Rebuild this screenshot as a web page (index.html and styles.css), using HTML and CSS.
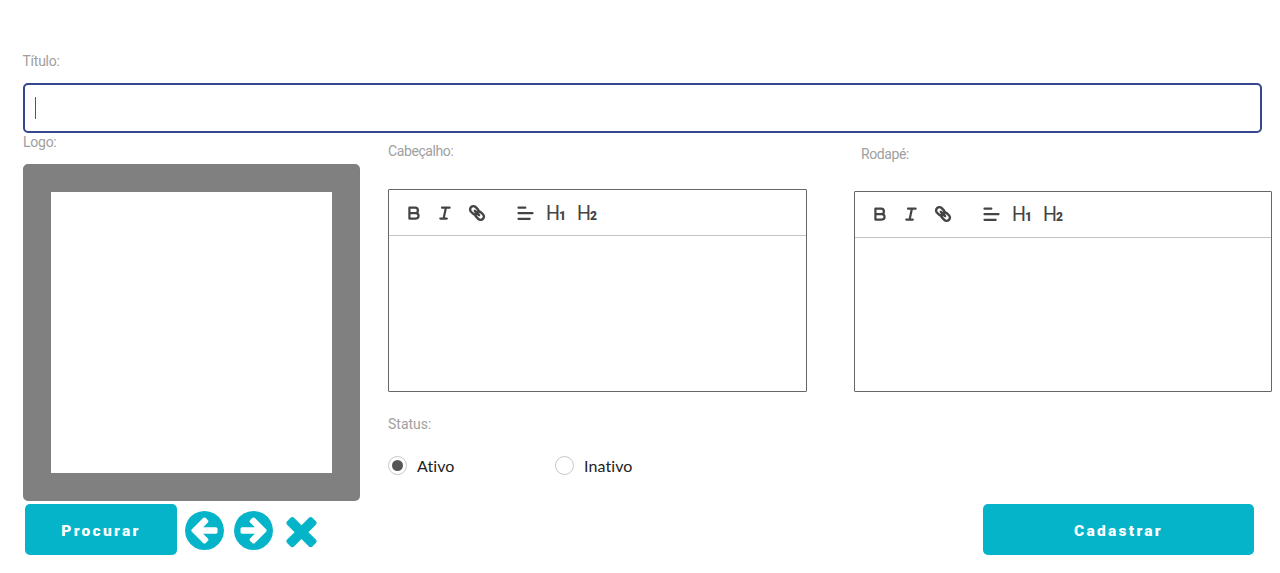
FILE: index.html
```html
<!DOCTYPE html>
<html lang="pt-BR">
<head>
<meta charset="utf-8">
<title>Cadastro</title>
<link rel="stylesheet" href="styles.css">
</head>
<body>
<svg class="defs" width="0" height="0" aria-hidden="true">
  <symbol id="bold" viewBox="0 0 18 18"><path d="M4.400 9.100h6.400M10.200 9.100a2.650 2.650 0 0 0 0-5.400H4.400v10.900h6.400a2.750 2.750 0 0 0 0-5.500"/></symbol>
  <symbol id="italic" viewBox="0 0 18 18"><path d="M6 3.700h7.600M4.300 14.600h6.500M9.900 3.700l-2.300 10.900"/></symbol>
  <symbol id="link" viewBox="0 0 18 18"><g transform="rotate(45 9 9)"><rect x="0.600" y="5.700" width="9.400" height="6.600" rx="3.300"/><rect x="8" y="5.700" width="9.400" height="6.600" rx="3.300"/><path d="M6 9h6"/></g></symbol>
  <symbol id="align" viewBox="0 0 18 18"><path d="M1.500 3.700h6.800M1.500 9.200h14M1.500 14.800h11.200"/></symbol>
  <symbol id="arrow" viewBox="128 128 1536 1536"><path d="M1408 960v-128q0-26-19-45t-45-19h-502l189-189q19-19 19-45t-19-45l-91-91q-18-18-45-18t-45 18l-362 362-91 91q-18 18-18 45t18 45l91 91 362 362q18 18 45 18t45-18l91-91q18-18 18-45t-18-45l-189-189h502q26 0 45-19t19-45zm256-64q0 209-103 385.500t-279.500 279.500-385.500 103-385.500-103-279.500-279.500-103-385.500 103-385.500 279.500-279.500 385.500-103 385.500 103 279.500 279.500 103 385.500z"/></symbol>
</svg>
<form class="page">
  <label class="label title">Título:</label>
  <div class="input"><span class="caret"></span></div>
  <div class="columns">
    <section class="logo">
      <span class="label">Logo:</span>
      <div class="frame"></div>
    </section>
    <section class="header">
      <span class="label wide">Cabeçalho:</span>
      <div class="editor">
        <div class="toolbar">
          <svg class="tool"><use href="#bold"/></svg><svg class="tool"><use href="#italic"/></svg><svg class="tool link"><use href="#link"/></svg><svg class="tool align"><use href="#align"/></svg><span class="heading">H<b>1</b></span><span class="heading">H<b>2</b></span>
        </div>
      </div>
      <span class="label status">Status:</span>
      <div class="radios">
        <span class="option"><i class="radio checked"></i>Ativo</span>
        <span class="option"><i class="radio"></i>Inativo</span>
      </div>
    </section>
    <section class="footer">
      <span class="label wide">Rodapé:</span>
      <div class="editor">
        <div class="toolbar">
          <svg class="tool"><use href="#bold"/></svg><svg class="tool"><use href="#italic"/></svg><svg class="tool link"><use href="#link"/></svg><svg class="tool align"><use href="#align"/></svg><span class="heading">H<b>1</b></span><span class="heading">H<b>2</b></span>
        </div>
      </div>
    </section>
  </div>
  <div class="actions">
    <button type="button" class="button browse">Procurar</button>
    <svg class="action prev"><use href="#arrow"/></svg>
    <svg class="action next"><use href="#arrow"/></svg>
    <svg class="action remove" viewBox="128 128 1536 1536"><path d="M1490 1322q0 40-28 68l-136 136q-28 28-68 28t-68-28l-294-294-294 294q-28 28-68 28t-68-28l-136-136q-28-28-28-68t28-68l294-294-294-294q-28-28-28-68t28-68l136-136q28-28 68-28t68 28l294 294 294-294q28-28 68-28t68 28l136 136q28 28 28 68t-28 68l-294 294 294 294q28 28 28 68z"/></svg>
    <button type="button" class="button submit">Cadastrar</button>
  </div>
</form>
</body>
</html>
```
FILE: styles.css
```css
* { box-sizing: border-box; }
body { margin: 0; background: #fff; font-family: Roboto, sans-serif; overflow: hidden; }
.defs { display: block; height: 0; }
.page { padding: 50px 8px 0 22.5px; }
.label { display: block; height: 20px; font-size: 14px; line-height: 20px; letter-spacing: -0.25px; color: #a0a0a0; }
.label.title { padding-top: 1px; }
.label.wide { letter-spacing: -0.4px; }
.input { width: 1239px; height: 50px; margin: 13px 0 0 0.5px; padding: 12px 10px; border: 2px solid #34478f; border-radius: 5px; }
.caret { display: block; width: 1px; height: 22px; background: #555; }
.columns { display: grid; grid-template-columns: 337px 419px 437px; column-gap: 28px; height: 371px; margin-left: 0.5px; }
.logo .label { line-height: 19px; }
.header { padding-top: 8px; }
.footer { margin-left: 19px; padding-top: 11px; width: 418px; }
.footer .label { margin-left: 7px; }
.frame { width: 337px; height: 337px; margin-top: 11px; border: 28px solid #808080; border-radius: 5px; background: #fff; }
.editor { height: 203px; margin-top: 28px; border: 1px solid #666; border-radius: 1px; }
.footer .editor { height: 201px; margin-top: 27px; }
.toolbar { display: flex; align-items: center; height: 46px; padding: 0 0 0 16px; border-bottom: 1px solid #c4c4c4; color: #444; }
.footer .toolbar .tool { margin-top: -1px; }
.tool { width: 18px; height: 18px; margin-right: 13px; fill: none; stroke: #444; stroke-width: 2.2; stroke-linecap: round; stroke-linejoin: round; }
.link { margin: 0 31px 0 1px; stroke-width: 2.4; }
.align { margin-right: 11px; }
.heading { width: 31px; padding-top: 4px; font-size: 19.5px; line-height: 22px; letter-spacing: -1px; white-space: nowrap; }
.footer .heading { padding-top: 3px; }
.heading b { font-size: 12px; font-weight: 900; }
.status { margin-top: 22px; letter-spacing: 0; }
.radios { display: flex; margin-top: 20px; font: 16px/24px Lato, sans-serif; font-variant-ligatures: none; letter-spacing: 0.1px; color: #222; }
.option { display: flex; align-items: center; width: 167px; }
.radio { display: grid; place-items: center; width: 19px; height: 19px; margin: -2px 10px 0 0; border: 1px solid #c8c8c8; border-radius: 50%; }
.checked::after { content: ""; width: 11px; height: 11px; border-radius: 50%; background: #555; }
.actions { display: flex; padding-left: 2.5px; }
.button { height: 51px; padding: 3px 0 0 0; border: 0; border-radius: 5px; background: #05b4c9; color: #fff; font: 900 15.5px/20px Roboto, sans-serif; letter-spacing: 2.3px; }
.browse { width: 152px; margin-right: 8px; }
.action { width: 39px; height: 39px; margin-top: 7px; fill: #05b4c9; }
.next { margin-left: 10px; transform: scaleX(-1); }
.remove { margin-left: 9px; }
.submit { width: 271px; margin-left: auto; margin-right: 18px; }
```
